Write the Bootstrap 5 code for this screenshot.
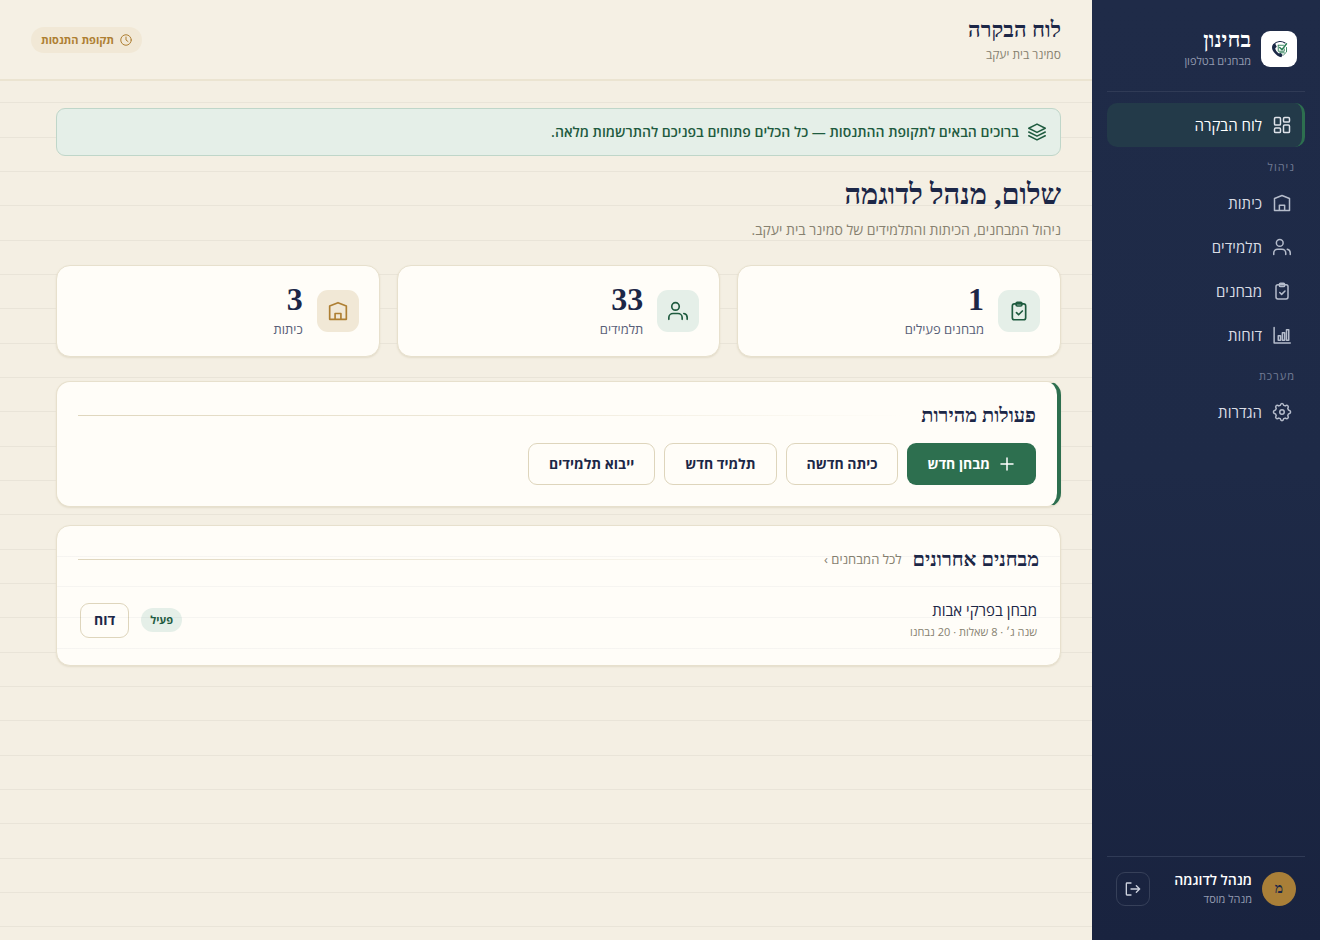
<!DOCTYPE html>
<html lang="he" dir="rtl">
<head>
<meta charset="utf-8">
<meta name="viewport" content="width=device-width, initial-scale=1">
<title>לוח הבקרה</title>
<link href="https://cdn.jsdelivr.net/npm/bootstrap@5.3.0/dist/css/bootstrap.min.css" rel="stylesheet">
<style>
:root{--ink:#1c2747;--green:#2d6f4f;--green-dark:#1f5b3f;--mint:#e5efe8;--gold:#ae7f33;--sand:#f1e8d6;--line:#e7e0cd;--paper:#fffdf8;--muted-tx:#878170}
body{font-family:"Open Sans","Noto Sans",sans-serif;font-size:15px;line-height:20px;color:var(--ink);
  background:#f4efe3 repeating-linear-gradient(to bottom,transparent 0 34px,#e9e4d8 34px 35px,transparent 35px 68px,#e9e4d8 68px 69px,transparent 69px 102px,#e9e4d8 102px 103px)}
h1,h2,.serif{font-family:"Liberation Serif",serif;font-weight:700;margin:0;color:var(--ink)}
svg{fill:none;stroke:currentColor;stroke-width:2;stroke-linecap:round;stroke-linejoin:round;flex:none}
a{text-decoration:none;color:inherit}
.side{width:228px;padding:28px 15px 32px;background:linear-gradient(#1f2b48,#1e2a47 50%,#19233f);color:#fff}
.brand-row{padding:0 8px 21px;gap:10px;border-bottom:1px solid #303b56}
.logo-tile{width:36px;height:36px;border-radius:9px;background:#fff}
.brand-name{font-size:22px;line-height:24px;color:#fff}
.dim{color:#939bb0;font-size:11px;line-height:18px}
.main-nav{margin-top:11px}
.side .nav-link{height:42px;padding:0 14px;gap:11px;color:#d9dce4;font-weight:500;border-radius:10px;display:flex;align-items:center}
.side .nav-link svg{color:#b5bccb}
.side .nav-link.active{height:44px;color:#fff;background:#233a49;border-right:3px solid var(--green);padding-right:11px}
.side .nav-link.active svg{color:#dfe3ea}
.side-group{gap:2px}
.side-label{color:#717b94;font-size:11px;line-height:16px;letter-spacing:1px;padding:0 10px;margin:12px 0 7px}
.user-row{border-top:1px solid #303b56;padding:13px 9px 0;gap:10px}
.user-name{font-size:14px;font-weight:600}
.avatar{width:34px;height:34px;border-radius:50%;background:#a97f38;font-size:14px}
.btn-out{width:34px;height:34px;padding:0;border:1px solid #364059;border-radius:9px;color:#cdd2de;background:transparent}
.topbar{height:81px;padding:0 31px;background:#f5f0e4;border-bottom:2px solid #ebe4d1}
.topbar h1{font-size:22px;line-height:30px}
.sub{color:var(--muted-tx);font-size:12px;line-height:20px}
.trial{background:var(--sand);color:var(--gold);border-radius:13px;height:26px;padding:0 10px;gap:6px;font-size:11px;font-weight:700}
.page{padding:27px 31px 40px 56px}
.welcome{background:var(--mint);border:1px solid #bfd6c9;border-radius:9px;height:48px;padding:0 14px;gap:9px;color:var(--green-dark);font-size:14px;font-weight:600;margin:0}
.hello{font-size:29px;line-height:40px;margin-top:18px}
.lead-line{color:var(--muted-tx);font-size:14px;font-weight:500;line-height:20px;margin:6px 0 25px}
.panel{background:var(--paper);border:1px solid var(--line);border-radius:14px;box-shadow:0 1px 2px #e3dcca}
.stat{height:92px;padding:0 20px;gap:14px}
.stat-icon{width:42px;height:42px;border-radius:11px;background:var(--mint);color:var(--green-dark)}
.stat-icon.warm{background:var(--sand);color:var(--gold)}
.stat-num{font-size:32px;line-height:36px}
.stat-cap{color:#595f78;font-size:13px;line-height:24px}
.stats{--bs-gutter-x:17px}
.quick{margin-top:24px;padding:20px 21px 21px;border-right:4px solid var(--green)}
.quick-list{gap:9px;margin-top:15px}
.rule{height:1px;flex:1;background:linear-gradient(to left,transparent,#dfd6bd)}
.panel h2{font-size:20px;line-height:26px}
.btn-main,.btn-line{height:42px;border-radius:9px;padding:0 20px;font-size:14px;font-weight:700;line-height:20px}
.btn-main{border:0}
.btn-main,.btn-main:hover{background:var(--green);color:#fff}
.btn-line{border:1px solid #ded5bc;color:var(--ink);background:var(--paper)}
.recent{margin-top:18px;padding:20px 21px 23px;position:relative}
.recent::after{content:"";position:absolute;inset:0;pointer-events:none;border-radius:13px;background:repeating-linear-gradient(to bottom,transparent 0 30px,#1c27470a 30px 31px,transparent 31px 60px,#1c27470a 60px 61px,transparent 61px 91px,#1c27470a 91px 92px)}
.recent-head{gap:11px}
.link-all{color:var(--muted-tx);font-size:13px}
.exam{margin-top:26px;padding:0 2px;gap:12px}
.exam-name{font-weight:500;line-height:24px}
.exam .sub{font-size:11px}
.state{background:var(--mint);color:var(--green-dark);height:24px;border-radius:12px;padding:0 9px;font-size:11px;font-weight:700}
.btn-small{height:35px;padding:0 13px}
</style>
</head>
<body>
<div class="d-flex min-vh-100">
  <aside class="side d-flex flex-column flex-shrink-0">
    <div class="brand-row d-flex align-items-center">
      <span class="logo-tile d-flex align-items-center justify-content-center flex-shrink-0">
        <svg width="18" height="18" viewBox="0 0 24 24"><path d="M5 5C2 7 2 12 5 16s7 7 10 7l2-3-3-3-2 1c-3-2-5-5-5-7l2-2-2-4z" fill="#1b2947" stroke="none"/><path d="M5 6c4-5 11-5 15-2" stroke="#1b2947" stroke-width="1.500"/><path d="M22 10v6l-4 4" stroke="#2d8058" stroke-width="1.200"/><path d="M11 7h7M11 7v8h8v-3M13 17h6" stroke="#2d8058" stroke-width="1.200"/><path d="m13 10 3 3 6-8" stroke="#2d8058" stroke-width="2"/></svg>
      </span>
      <div><div class="brand-name serif">בחינון</div><div class="dim">מבחנים בטלפון</div></div>
    </div>
    <nav class="main-nav nav flex-column flex-nowrap" aria-label="ראשי">
      <a class="nav-link active" href="#"><svg width="18" height="18" viewBox="0 0 24 24"><rect x="2" y="2" width="8" height="10" rx="1.500"/><rect x="14" y="2" width="8" height="6" rx="1.500"/><rect x="14" y="12" width="8" height="10" rx="1.500"/><rect x="2" y="16" width="8" height="6" rx="1.500"/></svg>לוח הבקרה</a>
      <div class="side-label">ניהול</div>
      <div class="side-group d-flex flex-column">
        <a class="nav-link" href="#"><svg width="18" height="18" viewBox="0 0 24 24"><path d="M2 6 12 2l10 4v16H2zM8.500 22v-7h7v7"/></svg>כיתות</a>
        <a class="nav-link" href="#"><svg width="18" height="18" viewBox="0 0 24 24"><circle cx="9" cy="6.500" r="4.500"/><path d="M1 22v-2a5 5 0 0 1 5-5h6a5 5 0 0 1 5 5v2M19 15a5 5 0 0 1 4 5v2"/></svg>תלמידים</a>
        <a class="nav-link" href="#"><svg width="18" height="18" viewBox="0 0 24 24"><rect x="4" y="3.500" width="16" height="19" rx="2.500"/><rect x="8.500" y="1.500" width="7" height="4.500" rx="1.500"/><path d="m9 14 2.500 2.500L16 12"/></svg>מבחנים</a>
        <a class="nav-link" href="#"><svg width="18" height="18" viewBox="0 0 24 24"><path d="M1.500 2v20.500H23M7 19v-6h3v6zM12.500 19V9h3v10zM18 19V5h3v14z"/></svg>דוחות</a>
      </div>
      <div class="side-label">מערכת</div>
      <a class="nav-link" href="#"><svg width="18" height="18" viewBox="0 0 24 24" overflow="visible"><circle cx="12" cy="12" r="3"/><path d="M12 .5c1.500 0 2 1 2.300 2.600l2 .8c1.400-1 2.500-1.200 3.500-.2s.8 2.200-.1 3.500l.9 2.200c1.600.3 2.900.9 2.900 2.600s-1.300 2.300-2.900 2.600l-.9 2.200c.9 1.300 1.100 2.500.1 3.500s-2.100.8-3.500-.2l-2 .8c-.3 1.600-.8 2.600-2.300 2.600s-2-1-2.300-2.600l-2-.8c-1.400 1-2.500 1.200-3.500.2s-.8-2.200.1-3.500l-.9-2.200C1.800 14.300.5 13.700.5 12s1.300-2.300 2.900-2.600l.9-2.200c-.9-1.300-1.100-2.500-.1-3.500s2.100-.8 3.500.2l2-.8C10 1.500 10.500.5 12 .5z"/></svg>הגדרות</a>
    </nav>
    <div class="user-row d-flex align-items-center mt-auto">
      <span class="avatar serif d-flex align-items-center justify-content-center flex-shrink-0">מ</span>
      <div class="flex-grow-1"><div class="user-name">מנהל לדוגמה</div><div class="dim">מנהל מוסד</div></div>
      <button class="btn btn-out d-flex align-items-center justify-content-center" type="button" aria-label="יציאה"><svg width="16" height="16" viewBox="0 0 24 24"><path d="M9 3H3a1 1 0 0 0-1 1v16a1 1 0 0 0 1 1h6M9 12h13M17 7l5 5-5 5"/></svg></button>
    </div>
  </aside>
  <div class="flex-grow-1">
    <header class="topbar d-flex align-items-center justify-content-between">
      <div><h1>לוח הבקרה</h1><div class="sub">סמינר בית יעקב</div></div>
      <span class="trial d-flex align-items-center"><svg width="12" height="12" viewBox="0 0 24 24"><circle cx="12" cy="12" r="10.500"/><path d="M12 6v6l4 3"/></svg>תקופת התנסות</span>
    </header>
    <main class="page">
      <p class="welcome d-flex align-items-center"><svg width="18" height="18" viewBox="0 0 24 24"><path d="m12 1.500 11 5.500-11 5.500L1 7zM1 12l11 5.500L23 12M1 17l11 5.500L23 17"/></svg><span>ברוכים הבאים לתקופת ההתנסות — כל הכלים פתוחים בפניכם להתרשמות מלאה.</span></p>
      <h2 class="hello">שלום, מנהל לדוגמה</h2>
      <p class="lead-line">ניהול המבחנים, הכיתות והתלמידים של סמינר בית יעקב.</p>
      <div class="row stats">
        <div class="col-4"><div class="panel stat d-flex align-items-center"><span class="stat-icon d-flex align-items-center justify-content-center"><svg width="20" height="20" viewBox="0 0 24 24"><rect x="4" y="3.500" width="16" height="19" rx="2.500"/><rect x="8.500" y="1.500" width="7" height="4.500" rx="1.500"/><path d="m9 14 2.500 2.500L16 12"/></svg></span><div><div class="stat-num serif">1</div><div class="stat-cap">מבחנים פעילים</div></div></div></div>
        <div class="col-4"><div class="panel stat d-flex align-items-center"><span class="stat-icon d-flex align-items-center justify-content-center"><svg width="20" height="20" viewBox="0 0 24 24"><circle cx="9" cy="6.500" r="4.500"/><path d="M1 22v-2a5 5 0 0 1 5-5h6a5 5 0 0 1 5 5v2M19 15a5 5 0 0 1 4 5v2"/></svg></span><div><div class="stat-num serif">33</div><div class="stat-cap">תלמידים</div></div></div></div>
        <div class="col-4"><div class="panel stat d-flex align-items-center"><span class="stat-icon warm d-flex align-items-center justify-content-center"><svg width="20" height="20" viewBox="0 0 24 24"><path d="M2 6 12 2l10 4v16H2zM8.500 22v-7h7v7"/></svg></span><div><div class="stat-num serif">3</div><div class="stat-cap">כיתות</div></div></div></div>
      </div>
      <section class="panel quick">
        <div class="d-flex align-items-center gap-3"><h2>פעולות מהירות</h2><span class="rule"></span></div>
        <div class="quick-list d-flex flex-wrap">
          <button type="button" class="btn btn-main d-flex align-items-center gap-2"><svg width="18" height="18" viewBox="0 0 24 24"><path d="M12 4v16M4 12h16"/></svg>מבחן חדש</button>
          <button type="button" class="btn btn-line">כיתה חדשה</button>
          <button type="button" class="btn btn-line">תלמיד חדש</button>
          <button type="button" class="btn btn-line">ייבוא תלמידים</button>
        </div>
      </section>
      <section class="panel recent">
        <div class="recent-head d-flex align-items-center"><h2>מבחנים אחרונים</h2><a class="link-all" href="#">לכל המבחנים ›</a><span class="rule"></span></div>
        <div class="exam d-flex align-items-center">
          <div class="flex-grow-1"><div class="exam-name">מבחן בפרקי אבות</div><div class="sub">שנה ג׳ · 8 שאלות · 20 נבחנו</div></div>
          <span class="state d-flex align-items-center">פעיל</span>
          <button type="button" class="btn btn-line btn-small">דוח</button>
        </div>
      </section>
    </main>
  </div>
</div>
<script src="https://cdn.jsdelivr.net/npm/bootstrap@5.3.0/dist/js/bootstrap.bundle.min.js"></script>
</body>
</html>
